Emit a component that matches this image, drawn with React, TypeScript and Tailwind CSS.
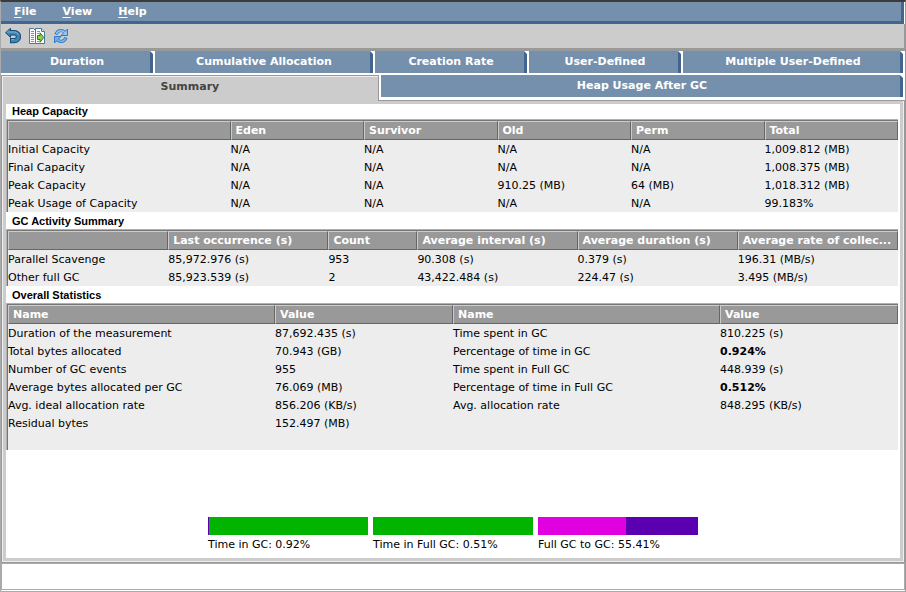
import type { ReactNode } from "react";

const font = "font-['DejaVu_Sans',sans-serif]";

function MenuItem({ label }: { label: string }) {
  return (
    <button type="button" className="h-[19px] px-3 text-[11px] leading-[19px] font-bold text-white">
      <span className="underline underline-offset-2">{label[0]}</span>
      {label.slice(1)}
    </button>
  );
}

function Tab({ label, grow }: { label: string; grow: string }) {
  return (
    <button
      type="button"
      role="tab"
      aria-selected={false}
      className={`relative h-[22px] min-w-0 basis-0 border-r-[3px] border-[#41658f] bg-[#7590ac] pl-[3px] text-[11px] leading-[22px] font-bold text-white ${grow}`}
    >
      {label}
      <span className="absolute top-0 -right-[3px] size-[3px] bg-white [clip-path:polygon(0_0,100%_0,100%_100%)]" />
    </button>
  );
}

function BackIcon() {
  return (
    <svg viewBox="0 0 16 16" className="size-4" aria-hidden="true">
      <path d="M4 4.700H9.500a3.900 3.900 0 0 1 0 7.900H5" fill="none" stroke="#174a70" strokeWidth="5.400" />
      <path d="M5.500 0.300 0.500 4.700 5.500 9.300Z" fill="#3d86b5" stroke="#174a70" />
      <path d="M3.500 4.700H9.500a3.900 3.900 0 0 1 0 7.900H6" fill="none" stroke="#3d86b5" strokeWidth="3.400" />
      <path d="M2 4H10q2.600.4 3.400 3M6.500 11.600H9" fill="none" stroke="#78b2d6" />
    </svg>
  );
}

function ExportIcon() {
  return (
    <svg viewBox="0 0 16 16" className="size-4" aria-hidden="true">
      <path d="M.5.5h4l2 2v13h-6Z" fill="#fafafa" stroke="#447c99" />
      <path d="M6.500.5h6l3 3v12h-9Z" fill="#fff" stroke="#447c99" />
      <path d="M12.500.5v3h3" fill="#d7e6ee" stroke="#447c99" />
      <path d="M2 3.500h3M2 5.500h3M2 7.500h3M2 9.500h3M2 11.500h3M2 13.500h3M8 3.500h3M8 5.500h2M8 13.500h2" stroke="#8a8f91" />
      <path d="M8.500 7.500H11V4.800l3.800 4.700L11 14.300V11.500H8.500Z" fill="#8ed045" stroke="#3d741c" />
    </svg>
  );
}

function RefreshIcon() {
  return (
    <svg viewBox="0 0 16 16" className="size-4" aria-hidden="true">
      <path d="M3 6.500Q4.200 2.500 8 2.500q2 0 3.500 1.600" fill="none" stroke="#3079c9" strokeWidth="3.200" />
      <path d="M14.500 1v6.500H8Z" fill="#8cc5f2" stroke="#3079c9" />
      <path d="M3.400 5.800Q4.600 2.700 8 2.600q2 0 3.800 1.800" fill="none" stroke="#9bcdf5" strokeWidth="1.400" />
      <path d="M13 9.500Q11.800 13.500 8 13.500q-2 0-3.500-1.600" fill="none" stroke="#3079c9" strokeWidth="3.200" />
      <path d="M1.500 15V8.500H8Z" fill="#6fb0ea" stroke="#3079c9" />
      <path d="M12.600 10.200Q11.400 13.300 8 13.400q-2 0-3.800-1.800" fill="none" stroke="#7dbaf0" strokeWidth="1.400" />
    </svg>
  );
}

interface DataTableProps {
  title: string;
  widths: string[];
  heads: string[];
  rows: string[][];
  strong?: string[];
  footer?: ReactNode;
}

function DataTable({ title, widths, heads, rows, strong = [], footer }: DataTableProps) {
  return (
    <section aria-label={title} className="pr-0.5">
      <h2 className="h-[15px] pl-1.5 font-['Liberation_Sans',Arial,sans-serif] text-[11px] leading-[15px] font-bold text-black">
        {title}
      </h2>
      <div className="border-t border-l border-[#b0b0b0]">
        <div className="border-t border-l border-[#777] bg-[#ededed]">
          <table className="w-full table-fixed border-separate border-spacing-0 text-[11px] text-black">
            <colgroup>
              {widths.map((w, i) => (
                <col key={i} className={w} />
              ))}
            </colgroup>
            <thead>
              <tr>
                {heads.map((h, i) => (
                  <th
                    key={i}
                    scope="col"
                    className="h-[19px] truncate border border-t-[#ccc] border-r-[#666] border-b-[#666] border-l-[#ccc] bg-[#999] p-0 pl-1 text-left leading-[17px] font-bold text-white"
                  >
                    {h}
                  </th>
                ))}
              </tr>
            </thead>
            <tbody>
              {rows.map((row, r) => (
                <tr key={r}>
                  {row.map((cell, c) => (
                    <td
                      key={c}
                      className={`h-[18px] p-0 pt-0.5 leading-4 whitespace-nowrap ${strong.includes(cell) ? "font-bold" : ""}`}
                    >
                      {cell}
                    </td>
                  ))}
                </tr>
              ))}
            </tbody>
          </table>
          {footer}
        </div>
      </div>
    </section>
  );
}

const gauges = [
  { label: "Time in GC: 0.92%", value: 0.92, fill: "bg-[#5a00b0]", rest: "bg-[#00b400]" },
  { label: "Time in Full GC: 0.51%", value: 0, fill: "bg-[#5a00b0]", rest: "bg-[#00b400]" },
  { label: "Full GC to GC: 55.41%", value: 55, fill: "bg-[#e000e0]", rest: "bg-[#5a00b0]" },
];

export default function App() {
  return (
    <div className={`flex min-h-screen flex-col border-t-2 border-r border-b border-l border-t-[#3c3b37] border-r-[#999] border-b-[#aaa] border-l-[#aaa] bg-white ${font}`}>
      <nav aria-label="Main menu" className="mr-px flex h-[22px] gap-0.5 border-r-[3px] border-b-[3px] border-[#41658f] bg-[#7590ac] pl-px">
        <MenuItem label="File" />
        <MenuItem label="View" />
        <MenuItem label="Help" />
      </nav>

      <div className="flex h-[27px] items-center gap-2 border-r border-b-[3px] border-[#999] bg-[#ccc] pl-1">
        <button type="button" aria-label="Back"><BackIcon /></button>
        <button type="button" aria-label="Export"><ExportIcon /></button>
        <button type="button" aria-label="Refresh"><RefreshIcon /></button>
      </div>

      <div role="tablist" aria-label="Reports">
        <div className="flex gap-0.5 pr-0.5 pb-0.5">
          <Tab label="Duration" grow="grow-[146]" />
          <Tab label="Cumulative Allocation" grow="grow-[212]" />
          <Tab label="Creation Rate" grow="grow-[146]" />
          <Tab label="User-Defined" grow="grow-[146]" />
          <Tab label="Multiple User-Defined" grow="grow-[214]" />
        </div>
        <div className="flex bg-[#ccc]">
          <button
            type="button"
            role="tab"
            aria-selected
            className="h-[26px] min-w-0 grow-[378] basis-0 border-t border-l border-[#999] bg-[#ccc] pb-1 text-[11px] leading-[20px] font-bold text-[#444] shadow-[inset_1px_1px_0_#eee]"
          >
            Summary
          </button>
          <div className="flex min-w-0 grow-[525] basis-0 border-b border-l border-[#999] bg-white pr-0.5 pb-0.5 pl-0.5">
            <Tab label="Heap Usage After GC" grow="grow" />
          </div>
        </div>
      </div>

      <main className="flex flex-1 flex-col border-r border-b border-l border-[#999]">
        <div className="flex flex-1 flex-col border-r border-b border-l border-[#eee] bg-[#ccc] p-[3px]">
          <div className="flex flex-1 flex-col gap-0.5 bg-white">
            <DataTable
              title="Heap Capacity"
              widths={["w-[25%]", "w-[15%]", "w-[15%]", "w-[15%]", "w-[15%]", "w-[15%]"]}
              heads={["", "Eden", "Survivor", "Old", "Perm", "Total"]}
              rows={[
                ["Initial Capacity", "N/A", "N/A", "N/A", "N/A", "1,009.812 (MB)"],
                ["Final Capacity", "N/A", "N/A", "N/A", "N/A", "1,008.375 (MB)"],
                ["Peak Capacity", "N/A", "N/A", "910.25 (MB)", "64 (MB)", "1,018.312 (MB)"],
                ["Peak Usage of Capacity", "N/A", "N/A", "N/A", "N/A", "99.183%"],
              ]}
            />
            <DataTable
              title="GC Activity Summary"
              widths={["w-[18%]", "w-[18%]", "w-[10%]", "w-[18%]", "w-[18%]", "w-[18%]"]}
              heads={["", "Last occurrence (s)", "Count", "Average interval (s)", "Average duration (s)", "Average rate of collec..."]}
              rows={[
                ["Parallel Scavenge", "85,972.976 (s)", "953", "90.308 (s)", "0.379 (s)", "196.31 (MB/s)"],
                ["Other full GC", "85,923.539 (s)", "2", "43,422.484 (s)", "224.47 (s)", "3.495 (MB/s)"],
              ]}
            />
            <DataTable
              title="Overall Statistics"
              widths={["w-[30%]", "w-[20%]", "w-[30%]", "w-[20%]"]}
              heads={["Name", "Value", "Name", "Value"]}
              strong={["0.924%", "0.512%"]}
              rows={[
                ["Duration of the measurement", "87,692.435 (s)", "Time spent in GC", "810.225 (s)"],
                ["Total bytes allocated", "70.943 (GB)", "Percentage of time in GC", "0.924%"],
                ["Number of GC events", "955", "Time spent in Full GC", "448.939 (s)"],
                ["Average bytes allocated per GC", "76.069 (MB)", "Percentage of time in Full GC", "0.512%"],
                ["Avg. ideal allocation rate", "856.206 (KB/s)", "Avg. allocation rate", "848.295 (KB/s)"],
                ["Residual bytes", "152.497 (MB)", "", ""],
              ]}
              footer={<div className="h-[18px]" />}
            />
            <div className="mt-auto flex justify-center gap-[5px] pb-[3px]">
              {gauges.map((g) => (
                <div key={g.label} className="w-40">
                  <div className={`h-[18px] ${g.rest}`}>
                    <div className={`h-full ${g.fill}`} style={{ width: `${g.value}%` }} />
                  </div>
                  <p className="text-[11px] leading-5 text-black">{g.label}</p>
                </div>
              ))}
            </div>
          </div>
        </div>
      </main>

      <input
        type="text"
        readOnly
        aria-label="Status"
        className="mb-px block h-[27px] w-full border border-[#aaa] bg-white px-1 text-[11px] outline-none"
      />
    </div>
  );
}
